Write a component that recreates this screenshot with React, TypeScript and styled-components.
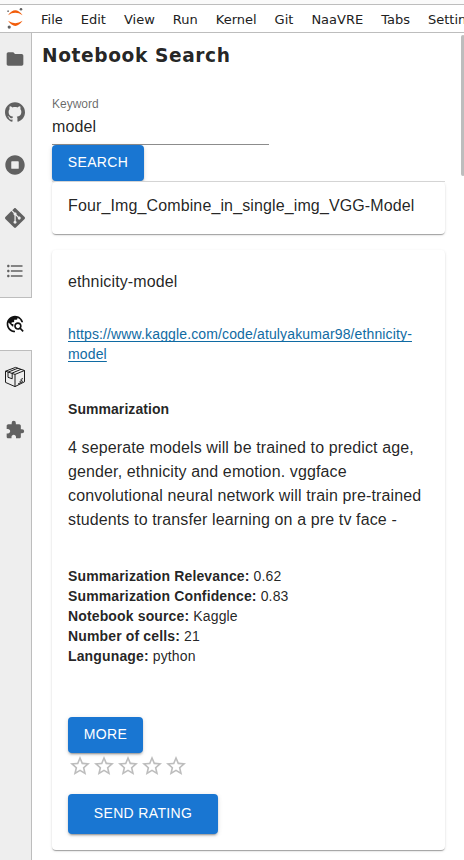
import React from 'react';
import styled, { createGlobalStyle } from 'styled-components';
import { MdFolder, MdExtension, MdFormatListBulleted, MdTravelExplore, MdStarBorder } from 'react-icons/md';
import { FaStopCircle } from 'react-icons/fa';
import { SiGit, SiGithub } from 'react-icons/si';

const GlobalStyle = createGlobalStyle`
  * { box-sizing: border-box; }
  body { margin: 0; background: #fff; overflow: hidden; }
`;

const Shell = styled.div`
  width: 464px;
  height: 860px;
  overflow: hidden;
  display: flex;
  flex-direction: column;
  background: #fff;
`;

const TopStrip = styled.div`
  flex: 0 0 5px;
  background: #fafafa;
  border-bottom: 1px solid #bdbdbd;
`;

const MenuBar = styled.nav`
  flex: 0 0 28px;
  display: flex;
  align-items: flex-start;
  border-bottom: 1px solid #bdbdbd;
  font: 13px/25px 'DejaVu Sans', sans-serif;
  color: #212121;
  white-space: nowrap;
`;

const LogoBox = styled.div`
  flex: 0 0 31px;
  height: 27px;
  svg { display: block; }
`;

const MenuItem = styled.span`
  padding: 2px 8px 0 10px;
`;

const Body = styled.div`
  flex: 1;
  min-height: 0;
  display: flex;
`;

const SideBar = styled.aside`
  flex: 0 0 32px;
  display: flex;
  flex-direction: column;
  background: #eee;
`;

const SideFill = styled.div`
  flex: 1;
  border-right: 1px solid #bdbdbd;
`;

const SideTab = styled.div<{ $active?: boolean }>`
  flex: 0 0 ${p => (p.$active ? 54 : 53)}px;
  display: flex;
  align-items: center;
  justify-content: center;
  padding-right: ${p => (p.$active ? 2 : 1)}px;
  padding-bottom: ${p => (p.$active ? 0 : 1)}px;
  color: ${p => (p.$active ? '#111' : '#616161')};
  background: ${p => (p.$active ? '#fff' : '#eee')};
  border: 0 solid #bdbdbd;
  border-width: ${p => (p.$active ? '1px 0' : '0 1px 0 0')};
  margin-top: ${p => (p.$active ? -1 : 0)}px;
  svg { display: block; }
`;

const Panel = styled.main`
  flex: 1;
  display: flex;
  flex-direction: column;
  min-width: 0;
  padding: 10px 15px 0 10px;
  font-family: 'Liberation Sans', Arial, sans-serif;
  color: rgba(0, 0, 0, 0.87);
`;

const Title = styled.h1`
  margin: 0;
  font: bold 18.6px/26px 'DejaVu Sans', sans-serif;
  letter-spacing: 0.6px;
`;

const Content = styled.div`
  margin: 25px 0 0 10px;
  display: flex;
  flex-direction: column;
  align-items: flex-start;
`;

const Field = styled.label`
  width: 217px;
  height: 51px;
  padding-top: 2px;
  display: flex;
  flex-direction: column;
  border-bottom: 1px solid #8c8c8c;
`;

const FieldLabel = styled.span`
  font-size: 12px;
  line-height: 17px;
  color: rgba(0, 0, 0, 0.6);
`;

const FieldValue = styled.span`
  font-size: 16px;
  line-height: 23px;
  letter-spacing: 0.13px;
  padding-top: 2px;
`;

const Button = styled.button<{ $width: number; $height: number }>`
  width: ${p => p.$width}px;
  height: ${p => p.$height}px;
  flex: none;
  padding: 0 0 2px;
  border: 0;
  border-radius: 4px;
  background: #1976d2;
  color: #fff;
  white-space: nowrap;
  font: 14px/24px 'Liberation Sans', Arial, sans-serif;
  letter-spacing: 0.35px;
  box-shadow: 0 3px 1px -2px rgba(0,0,0,.2), 0 2px 2px 0 rgba(0,0,0,.14), 0 1px 5px 0 rgba(0,0,0,.12);
`;

const Card = styled.section<{ $height: number }>`
  position: relative;
  width: 393px;
  height: ${p => p.$height}px;
  padding: 0 16px;
  display: flex;
  flex-direction: column;
  align-items: flex-start;
  background: #fff;
  border-radius: 4px;
  box-shadow: 0 2px 1px -1px rgba(0,0,0,.2), 0 1px 1px 0 rgba(0,0,0,.14), 0 1px 3px 0 rgba(0,0,0,.12);
`;

const Results = styled.div`
  border-top: 1px solid #d8d8d8;
  display: flex;
  flex-direction: column;
  gap: 16px;
`;

const CardTitle = styled.div<{ $top: number }>`
  margin-top: ${p => p.$top}px;
  font-size: 16px;
  line-height: 24px;
  letter-spacing: 0.125px;
  white-space: nowrap;
`;

const Link = styled.a`
  margin-top: 30px;
  font-size: 14px;
  line-height: 20px;
  letter-spacing: 0.135px;
  color: #106ba3;
  text-decoration: underline;
  text-decoration-skip-ink: none;
  text-underline-offset: 2px;
  text-decoration-thickness: 1px;
`;

const SubHeading = styled.h2`
  margin: 35px 0 0;
  font-size: 14px;
  line-height: 20px;
  letter-spacing: 0.06px;
`;

const Summary = styled.p`
  margin: 17px 0 0;
  font-size: 16px;
  line-height: 24px;
  letter-spacing: 0.125px;
  white-space: nowrap;
`;

const Facts = styled.div`
  margin: 34px 0 51px;
  font-size: 14px;
  line-height: 20px;
  letter-spacing: 0.14px;
`;

const Stars = styled.div`
  height: 41px;
  padding-top: 1px;
  display: flex;
  color: #bdbdbd;
  svg { display: block; }
`;

const ScrollThumb = styled.div`
  position: absolute;
  top: 35px;
  left: 461px;
  width: 4px;
  height: 141px;
  border-radius: 2px;
  background: #bdbdbd;
`;

const JupyterLogo = () => (
  <svg width="31" height="27" viewBox="0 0 31 27">
    <path d="M8 10.2Q15.2 .2 22.6 10.2Q15.2 5.5 8 10.2Z" fill="#f25d0b" />
    <path d="M8 15.8Q15.2 26 22.6 15.8Q15.2 20.6 8 15.8Z" fill="#f25d0b" />
    <circle cx="21" cy="4.3" r="1.3" fill="#616161" />
    <circle cx="8.1" cy="6.2" r=".9" fill="#757575" />
    <circle cx="9.2" cy="22.1" r="1.6" fill="#616161" />
  </svg>
);

const BoxIcon = () => (
  <svg width="22" height="22" viewBox="0 0 22 22" fill="none" stroke="#1b1b1b" strokeWidth="1" strokeLinejoin="round">
    <path d="M1.5 5.2L11.5 1.4L20.5 4.5V15.8L11 20.6L1.5 16.4ZM1.5 5.2L11 8.4L20.5 4.5M11 8.4V20.6" />
    <path d="M4.2 6.1L13.9 2.2M7.7 7.3L17 3.3M4 6.1V11.3L8.2 12.8V7.5" />
    <path d="M16.6 13.6L18.8 12.5M15.6 15.6L18.3 14.3M14 18L18.9 15.5" />
  </svg>
);

const menus = ['File', 'Edit', 'View', 'Run', 'Kernel', 'Git', 'NaaVRE', 'Tabs', 'Settings'];

const facts = [
  ['Summarization Relevance:', '0.62'],
  ['Summarization Confidence:', '0.83'],
  ['Notebook source:', 'Kaggle'],
  ['Number of cells:', '21'],
  ['Langunage:', 'python'],
];

export default function App() {
  return (
    <Shell>
      <GlobalStyle />
      <TopStrip />
      <MenuBar>
        <LogoBox><JupyterLogo /></LogoBox>
        {menus.map(m => <MenuItem key={m}>{m}</MenuItem>)}
      </MenuBar>
      <Body>
        <SideBar>
          <SideTab><MdFolder size={20} /></SideTab>
          <SideTab><SiGithub size={20} /></SideTab>
          <SideTab><FaStopCircle size={20} /></SideTab>
          <SideTab><SiGit size={20} /></SideTab>
          <SideTab><MdFormatListBulleted size={20} /></SideTab>
          <SideTab $active><MdTravelExplore size={20} /></SideTab>
          <SideTab><BoxIcon /></SideTab>
          <SideTab><MdExtension size={20} /></SideTab>
          <SideFill />
        </SideBar>
        <Panel>
          <Title>Notebook Search</Title>
          <Content>
            <Field>
              <FieldLabel>Keyword</FieldLabel>
              <FieldValue>model</FieldValue>
            </Field>
            <Button $width={92} $height={36}>SEARCH</Button>
            <Results>
              <Card $height={52}>
                <CardTitle $top={12}>Four_Img_Combine_in_single_img_VGG-Model</CardTitle>
              </Card>
              <Card $height={600}>
                <CardTitle $top={20}>ethnicity-model</CardTitle>
                <Link>https://www.kaggle.com/code/atulyakumar98/ethnicity-<br />model</Link>
                <SubHeading>Summarization</SubHeading>
                <Summary>
                  4 seperate models will be trained to predict age,<br />
                  gender, ethnicity and emotion. vggface<br />
                  convolutional neural network will train pre-trained<br />
                  students to transfer learning on a pre tv face -
                </Summary>
                <Facts>
                  {facts.map(([k, v]) => <div key={k}><b>{k}</b> {v}</div>)}
                </Facts>
                <Button $width={75} $height={36}>MORE</Button>
                <Stars>
                  {[1, 2, 3, 4, 5].map(n => <MdStarBorder key={n} size={24} />)}
                </Stars>
                <Button $width={150} $height={40}>SEND RATING</Button>
              </Card>
            </Results>
          </Content>
        </Panel>
      </Body>
      <ScrollThumb />
    </Shell>
  );
}
